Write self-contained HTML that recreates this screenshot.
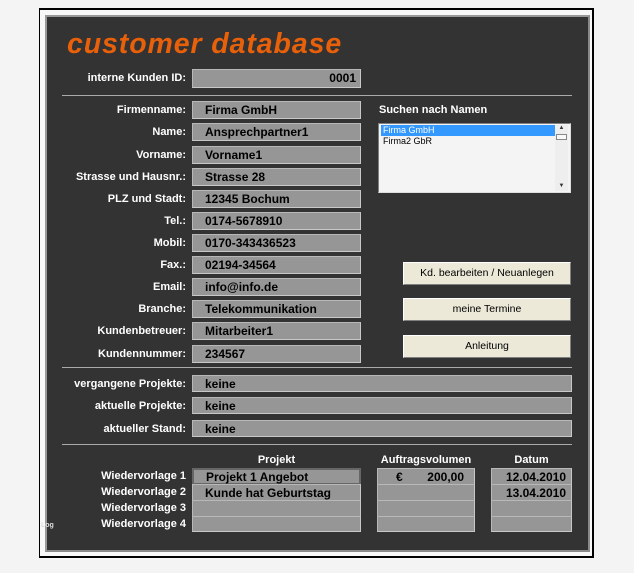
<!DOCTYPE html>
<html><head><meta charset="utf-8"><style>
*{margin:0;padding:0;box-sizing:border-box}
body{width:634px;height:573px;background:#f4f4f4;position:relative;overflow:hidden;font-family:"Liberation Sans",sans-serif}
.a{position:absolute}
.frame{left:39px;top:8px;width:555px;height:550px;border-top:2px solid #000;border-left:1px solid #000;border-bottom:2px solid #000;border-right:2px solid #000;background:#f8f8f8}
.panel{left:45px;top:15px;width:545px;height:537px;background:#333;border:2px solid #8a8a8a;border-top-color:#999;border-left-color:#999}
.t{left:67px;top:28px;color:#e8600a;font-weight:bold;font-style:italic;font-size:28.5px;letter-spacing:0.9px}
.l{color:#fff;font-weight:bold;font-size:11px;text-align:right;width:180px;left:6px;line-height:21px;white-space:nowrap}
.f{background:#969696;border:1px solid #b8b8b8;border-right-color:#c8c8c8;border-bottom-color:#c8c8c8;color:#000;font-weight:bold;font-size:12px;line-height:16px;padding-left:12px;white-space:nowrap}
.hr{height:1px;background:#aaa;left:62px;width:510px}
.btn{background:#ece9d8;border:1px solid #fff;border-right-color:#808080;border-bottom-color:#808080;font-size:10.5px;color:#000;text-align:center;left:403px;width:168px;height:23px;line-height:21px}
.h{color:#fff;font-weight:bold;font-size:11px;text-align:center}
</style></head><body>
<div class="a frame"></div>
<div class="a panel"></div>
<div class="a t">customer database</div>

<div class="a l" style="top:68px">interne Kunden ID:</div>
<div class="a f" style="left:192px;top:69px;width:169px;height:19px;text-align:right;padding-right:4px">0001</div>
<div class="a hr" style="top:95px"></div>

<div class="a l" style="top:100px">Firmenname:</div><div class="a f" style="left:192px;top:101px;width:169px;height:18px">Firma GmbH</div>
<div class="a l" style="top:122px">Name:</div><div class="a f" style="left:192px;top:123px;width:169px;height:18px">Ansprechpartner1</div>
<div class="a l" style="top:145px">Vorname:</div><div class="a f" style="left:192px;top:146px;width:169px;height:18px">Vorname1</div>
<div class="a l" style="top:167px">Strasse und Hausnr.:</div><div class="a f" style="left:192px;top:168px;width:169px;height:18px">Strasse 28</div>
<div class="a l" style="top:189px">PLZ und Stadt:</div><div class="a f" style="left:192px;top:190px;width:169px;height:18px">12345 Bochum</div>
<div class="a l" style="top:211px">Tel.:</div><div class="a f" style="left:192px;top:212px;width:169px;height:18px">0174-5678910</div>
<div class="a l" style="top:233px">Mobil:</div><div class="a f" style="left:192px;top:234px;width:169px;height:18px">0170-343436523</div>
<div class="a l" style="top:255px">Fax.:</div><div class="a f" style="left:192px;top:256px;width:169px;height:18px">02194-34564</div>
<div class="a l" style="top:277px">Email:</div><div class="a f" style="left:192px;top:278px;width:169px;height:18px">info@info.de</div>
<div class="a l" style="top:299px">Branche:</div><div class="a f" style="left:192px;top:300px;width:169px;height:18px">Telekommunikation</div>
<div class="a l" style="top:321px">Kundenbetreuer:</div><div class="a f" style="left:192px;top:322px;width:169px;height:18px">Mitarbeiter1</div>
<div class="a l" style="top:344px">Kundennummer:</div><div class="a f" style="left:192px;top:345px;width:169px;height:18px">234567</div>

<div class="a" style="left:379px;top:104px;color:#fff;font-weight:bold;font-size:11px">Suchen nach Namen</div>
<div class="a" style="left:378px;top:123px;width:193px;height:70px;background:#f4f4f4;border:1px solid #808080;border-right-color:#ddd;border-bottom-color:#ddd;font-size:9px">
 <div style="position:absolute;left:2px;top:1px;width:175px;height:11px;background:#3399ff;color:#fff;line-height:11px;padding-left:2px">Firma GmbH</div>
 <div style="position:absolute;left:2px;top:12px;line-height:11px;padding-left:2px">Firma2 GbR</div>
 <div style="position:absolute;right:2px;top:1px;width:13px;height:66px;background:#eee;font-size:6px;color:#333;text-align:center">▲<div style="width:11px;height:6px;border:1px solid #888;margin:3px auto;background:#f8f8f8"></div><div style="position:absolute;bottom:2px;width:13px">▼</div></div>
</div>

<div class="a btn" style="top:262px">Kd. bearbeiten / Neuanlegen</div>
<div class="a btn" style="top:298px">meine Termine</div>
<div class="a btn" style="top:335px">Anleitung</div>

<div class="a hr" style="top:367px"></div>
<div class="a l" style="top:374px">vergangene Projekte:</div><div class="a f" style="left:192px;top:375px;width:380px;height:17px">keine</div>
<div class="a l" style="top:396px">aktuelle Projekte:</div><div class="a f" style="left:192px;top:397px;width:380px;height:17px">keine</div>
<div class="a l" style="top:419px">aktueller Stand:</div><div class="a f" style="left:192px;top:420px;width:380px;height:17px">keine</div>
<div class="a hr" style="top:444px"></div>

<div class="a h" style="left:192px;top:454px;width:169px">Projekt</div>
<div class="a h" style="left:370px;top:454px;width:112px">Auftragsvolumen</div>
<div class="a h" style="left:491px;top:454px;width:81px">Datum</div>

<div class="a l" style="top:466px">Wiedervorlage 1</div>
<div class="a l" style="top:482px">Wiedervorlage 2</div>
<div class="a l" style="top:498px">Wiedervorlage 3</div>
<div class="a l" style="top:514px">Wiedervorlage 4</div>

<div class="a f" style="left:192px;top:468px;width:169px;height:17px;border:2px solid #666;line-height:14px">Projekt 1 Angebot</div>
<div class="a f" style="left:192px;top:484px;width:169px;height:17px">Kunde hat Geburtstag</div>
<div class="a f" style="left:192px;top:500px;width:169px;height:17px"></div>
<div class="a f" style="left:192px;top:516px;width:169px;height:16px"></div>

<div class="a f" style="left:377px;top:468px;width:98px;height:17px;padding-left:18px">€<span style="position:absolute;right:10px">200,00</span></div>
<div class="a f" style="left:377px;top:484px;width:98px;height:17px"></div>
<div class="a f" style="left:377px;top:500px;width:98px;height:17px"></div>
<div class="a f" style="left:377px;top:516px;width:98px;height:16px"></div>

<div class="a f" style="left:491px;top:468px;width:81px;height:17px;text-align:right;padding-right:5px">12.04.2010</div>
<div class="a f" style="left:491px;top:484px;width:81px;height:17px;text-align:right;padding-right:5px">13.04.2010</div>
<div class="a f" style="left:491px;top:500px;width:81px;height:17px"></div>
<div class="a f" style="left:491px;top:516px;width:81px;height:16px"></div>

<div class="a" style="left:41px;top:522px;color:#ddd;font-size:7px;font-weight:bold">Log</div>
</body></html>
